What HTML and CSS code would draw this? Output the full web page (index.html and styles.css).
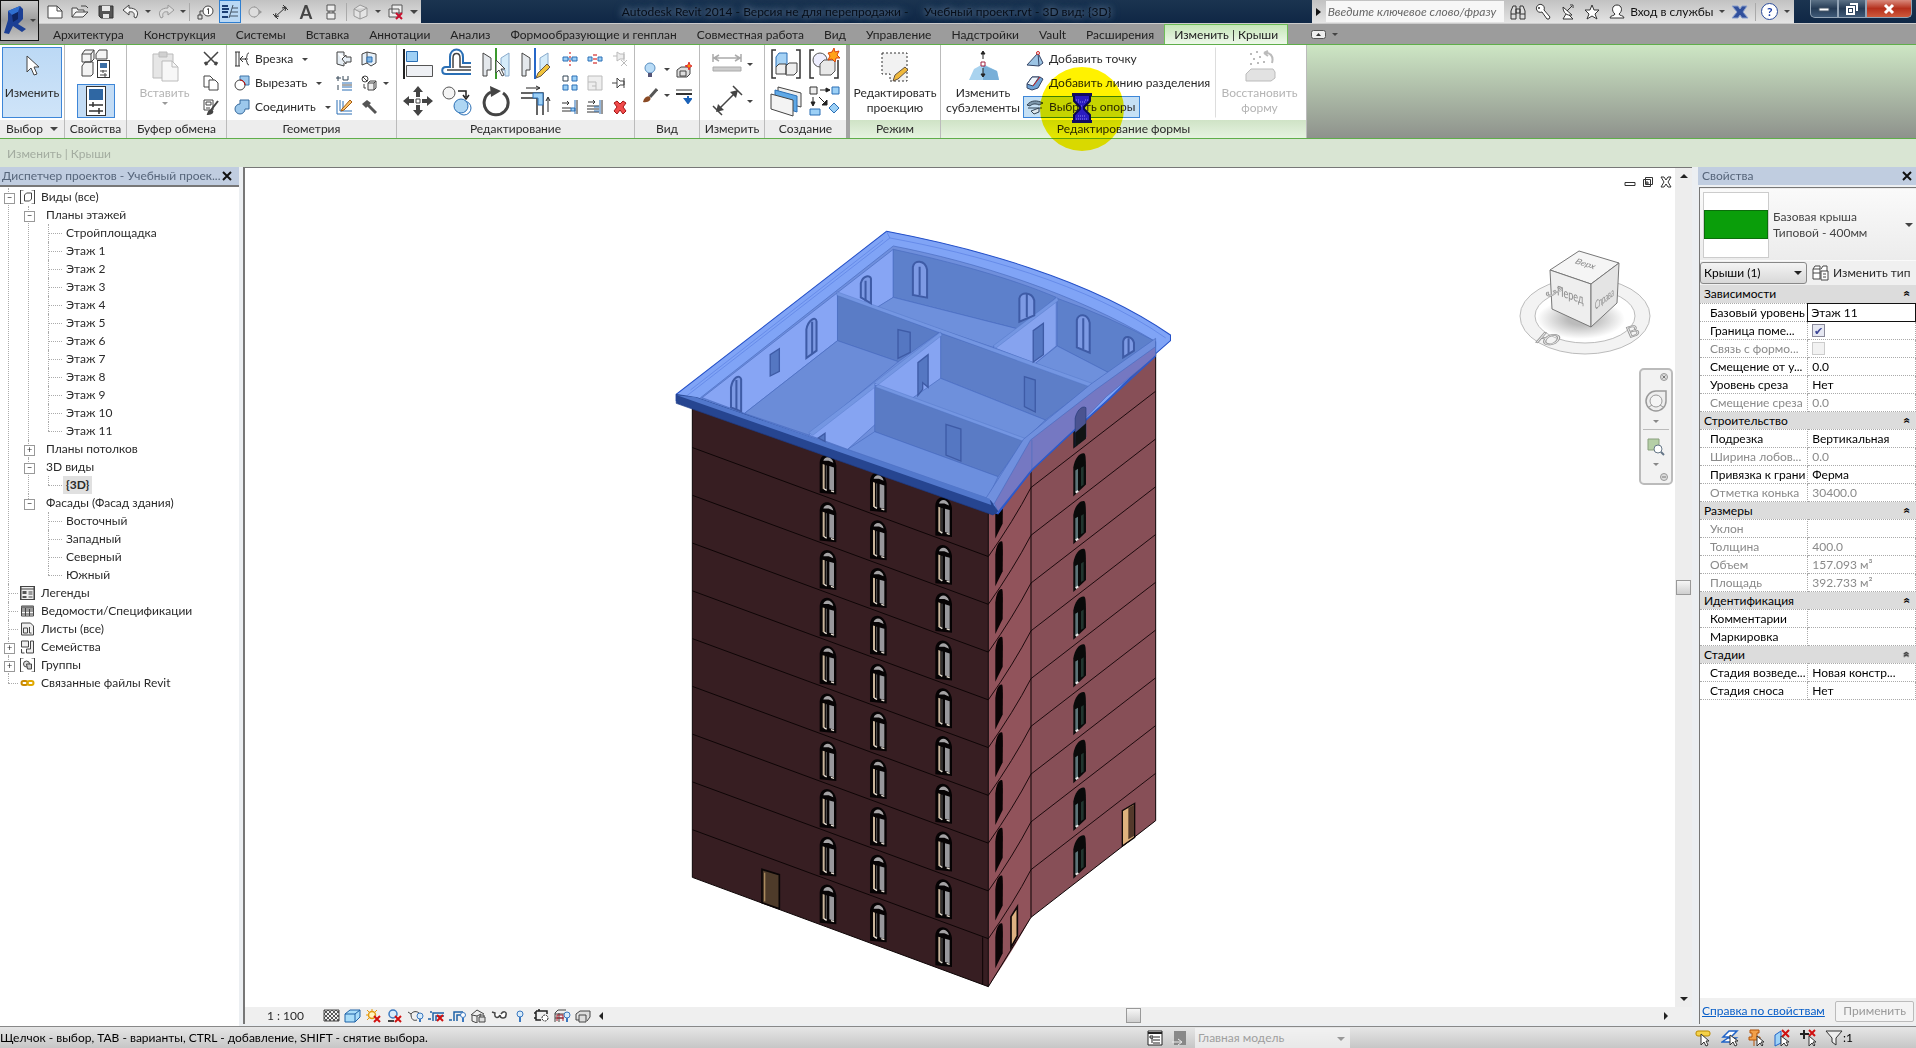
FILE: index.html
```html
<!DOCTYPE html>
<html lang="ru">
<head>
    <meta charset="UTF-8">
    <meta name="viewport" content="width=device-width, initial-scale=1.0">
    <title>Autodesk Revit 2014</title>
    <link rel="stylesheet" href="styles.css">
</head>
<body>
<header class="titlebar">
    <button class="app-button" aria-label="Меню приложения">
        <svg width="24" height="32" viewBox="0 0 24 32"><path d="M4 6 16 1 19 4v10l-5 5 8 5-4 3-9-6-4 8-5-1 4-13z" fill="#1c3f94"/><path d="M4 6 16 1l-2 6-6 3z" fill="#2f6fd0"/><path d="M8 10l6-3v7l-5 3z" fill="#0f2560"/></svg>
        <span class="caret"></span>
    </button>
    <div class="qat">
        <button class="qbtn" aria-label="Создать"><svg width="18" height="16" viewBox="0 0 18 16"><path d="M2 2h9l5 5v7H2z" fill="#fff" stroke="#444"/><path d="M11 2v5h5" fill="none" stroke="#444"/></svg></button>
        <button class="qbtn" aria-label="Открыть"><svg width="18" height="16" viewBox="0 0 18 16"><path d="M1 13V4h5l1 2h6v2M1 13l4-5h12l-5 5z" fill="#f4f4f4" stroke="#444"/><path d="M10 2h5l2 2" fill="none" stroke="#444"/></svg></button>
        <button class="qbtn" aria-label="Сохранить"><svg width="18" height="16" viewBox="0 0 18 16"><path d="M2 2h14v12H4l-2-2z" fill="#555" stroke="#333"/><path d="M5 2h8v5H5zM6 10h6v4H6z" fill="#e8e8e8"/></svg></button>
        <button class="qbtn" aria-label="Отменить"><svg width="18" height="16" viewBox="0 0 18 16"><path d="M7 1 1 6l6 5V8c4-1 6 1 5 5l2 1c4-6 0-10-7-10z" fill="#f6f6f6" stroke="#444"/></svg></button>
        <span class="caret"></span>
        <button class="qbtn" aria-label="Повторить"><svg width="18" height="16" viewBox="0 0 18 16"><path d="M11 1l6 5-6 5V8c-4-1-6 1-5 5l-2 1C0 8 4 4 11 4z" fill="#ddd" stroke="#999"/></svg></button>
        <span class="caret"></span>
        <span class="qsep"></span>
        <button class="qbtn" aria-label="Марка"><svg width="18" height="16" viewBox="0 0 18 16"><circle cx="12" cy="7" r="5" fill="#fff" stroke="#444"/><path d="M12.500 10V4.500l-1.500 1M7 7H4v4M2 11h4v4H2z" fill="none" stroke="#444"/></svg></button>
        <button class="qbtn qbtn-on" aria-label="Тонкие линии"><svg width="18" height="16" viewBox="0 0 18 16"><path d="M1 2h6M1 5h7M1 8h6M1 13h6" stroke="#1d3f73" stroke-width="2"/><path d="M8 14 12 1M11 4h6M10 8h7M9 12h8" stroke="#456" fill="none"/></svg></button>
        <button class="qbtn" aria-label="Разрез"><svg width="18" height="16" viewBox="0 0 18 16"><path d="M8 2 16 8 8 14z" fill="#999"/><circle cx="8" cy="8" r="5" fill="#ddd" stroke="#999"/></svg></button>
        <button class="qbtn" aria-label="Размер"><svg width="18" height="16" viewBox="0 0 18 16"><path d="M3 13 14 3M1 10l5 5M11 1l5 5M3 13l1-4M3 13l4-1M14 3l-4 1M14 3l-1 4" stroke="#333" fill="none"/></svg></button>
        <button class="qbtn qbtn-text" aria-label="Текст">A</button>
        <button class="qbtn" aria-label="Сечение"><svg width="18" height="16" viewBox="0 0 18 16"><path d="M5 1h8v6H5zM5 9h8v6H5zM7 7v2M11 7v2" fill="#eee" stroke="#555"/></svg></button>
        <span class="qsep"></span>
        <button class="qbtn" aria-label="3D вид"><svg width="18" height="16" viewBox="0 0 18 16"><path d="M2 5l6-4 7 3v8l-7 3-6-3zM2 5l6 3 7-4M8 8v7" fill="#e4e4e4" stroke="#999"/></svg></button>
        <span class="caret"></span>
        <button class="qbtn" aria-label="Закрыть окна"><svg width="18" height="16" viewBox="0 0 18 16"><path d="M5 1h10v8H5zM2 5h10v8H2z" fill="#eee" stroke="#555"/><path d="M9 9l6 6M15 9l-6 6" stroke="#c8102e" stroke-width="2"/></svg></button>
        <span class="caret caret-big"></span>
    </div>
    <h1 class="title">Autodesk Revit 2014 - Версия не для перепродажи - &nbsp; &nbsp; Учебный проект.rvt - 3D вид: {3D}</h1>
    <div class="infocenter">
        <span class="play"></span>
        <input class="search" type="text" aria-label="Поиск" placeholder="Введите ключевое слово/фразу">
        <button class="ibtn" aria-label="Найти"><svg width="18" height="18" viewBox="0 0 18 18"><path d="M2 16V8l2-5h3v13zM16 16V8l-2-5h-3v13zM7 6h4v4H7zM2 11h5M11 11h5" fill="#ddd" stroke="#333"/></svg></button>
        <button class="ibtn" aria-label="Ключ"><svg width="18" height="18" viewBox="0 0 18 18"><path d="M8 9a4 4 0 1 1 2-2l6 7-1 2-2 0z" fill="#fff" stroke="#333"/><circle cx="5" cy="5" r="1" fill="#333"/></svg></button>
        <button class="ibtn" aria-label="Связь"><svg width="18" height="18" viewBox="0 0 18 18"><path d="M4 4c0 6 4 9 9 8zM8 8l5-5M11 2h3v3M7 11l-3 5h10l-4-4" fill="#fff" stroke="#333"/></svg></button>
        <button class="ibtn" aria-label="Избранное"><svg width="18" height="18" viewBox="0 0 18 18"><path d="M9 2l2 5h5l-4 4 2 5-5-3-5 3 2-5-4-4h5z" fill="#fff" stroke="#333"/></svg></button>
        <button class="ibtn signin"><svg width="18" height="18" viewBox="0 0 18 18"><path d="M2 15c0-3 5-2 5-4-4-3-3-9 2-9s6 6 2 9c0 2 5 1 5 4z" fill="#fff" stroke="#333"/></svg>Вход в службы</button>
        <span class="caret"></span>
        <button class="ibtn exchange" aria-label="Exchange"><svg width="18" height="16" viewBox="0 0 18 16"><path d="M1 2h6l2 3 2-3h5l-4 6 5 6h-6l-2-3-2 3H1l5-6z" fill="#31509c" stroke="#8ca0cc"/></svg></button>
        <span class="qsep"></span>
        <button class="ibtn help" aria-label="Справка"><span>?</span></button>
        <span class="caret"></span>
    </div>
    <div class="window-buttons">
        <button aria-label="Свернуть"><svg width="14" height="12" viewBox="0 0 14 12"><path d="M2 5h10v3H2z" fill="#fff" stroke="#456"/></svg></button>
        <button aria-label="Развернуть"><svg width="14" height="12" viewBox="0 0 14 12"><path d="M5 1h7v7M2 4h7v7H2zM5 7h1v1H5z" fill="none" stroke="#fff" stroke-width="2"/></svg></button>
        <button class="close" aria-label="Закрыть"><svg width="14" height="12" viewBox="0 0 14 12"><path d="M3 2l8 8M11 2l-8 8" stroke="#fff" stroke-width="3"/></svg></button>
    </div>
</header>

<nav class="tabs">
    <a href="#">Архитектура</a>
    <a href="#">Конструкция</a>
    <a href="#">Системы</a>
    <a href="#">Вставка</a>
    <a href="#">Аннотации</a>
    <a href="#">Анализ</a>
    <a href="#">Формообразующие и генплан</a>
    <a href="#">Совместная работа</a>
    <a href="#">Вид</a>
    <a href="#">Управление</a>
    <a href="#">Надстройки</a>
    <a href="#">Vault</a>
    <a href="#">Расширения</a>
    <a href="#" class="active">Изменить | Крыши</a>
    <button class="collapse" aria-label="Свернуть ленту"><svg width="15" height="9" viewBox="0 0 15 9"><rect x=".5" y=".5" width="14" height="8" rx="2" fill="#eee" stroke="#555"/><path d="M5 6l2.500-3L10 6z" fill="#333"/></svg></button>
    <span class="caret"></span>
</nav>

<div class="ribbon">
    <section class="panel p-select">
        <div class="panel-body">
            <button class="big big-on"><svg width="32" height="32" viewBox="0 0 32 32"><path d="M11 6v16l4-4 3 7 3-1-3-7h5z" fill="#fff" stroke="#444"/></svg>Изменить</button>
        </div>
        <h2>Выбор <span class="caret caret-big"></span></h2>
    </section>
    <section class="panel p-props">
        <div class="panel-body column">
            <button class="tile" aria-label="Свойства типа"><svg width="32" height="32" viewBox="0 0 32 32"><path d="M2 6l3-4h9v9l-3 3H2zM16 6l3-4h8v9H16zM2 18l3-4h8v12l-2 2H2zM2 6h9v8M11 6l3-4" fill="#f4f4f4" stroke="#444"/><rect x="17.500" y="12.500" width="12" height="17" fill="#fff" stroke="#333"/><path d="M20 15h7v5h-7z" fill="#3a6ea5"/><path d="M20 23h7M20 27h7M23 22v3M25 25v4" stroke="#444"/></svg></button>
            <button class="tile tile-on" aria-label="Свойства"><svg width="32" height="32" viewBox="0 0 32 32"><rect x="6.500" y="1.500" width="19" height="29" fill="#fff" stroke="#333"/><path d="M9 4h14v11H9z" fill="#2f67a3"/><path d="M9 20h14M9 26h14M13 17v5M19 23v6" stroke="#333" stroke-width="1.500"/></svg></button>
        </div>
        <h2>Свойства</h2>
    </section>
    <section class="panel p-clip">
        <div class="panel-body">
            <button class="big dim"><svg width="32" height="32" viewBox="0 0 32 32"><path d="M4 4h20v24H4z" fill="#e6e6e6" stroke="#bbb"/><path d="M10 2h8v5h-8z" fill="#d0d0d0" stroke="#bbb"/><path d="M13 11h10l6 6v14H13z" fill="#f7f7f7" stroke="#bbb"/><path d="M23 11v6h6" fill="none" stroke="#bbb"/></svg>Вставить<span class="caret"></span></button>
            <div class="stack">
                <button aria-label="Вырезать"><svg width="16" height="16" viewBox="0 0 16 16"><path d="M1 1l11 11M15 1 4 12" stroke="#444" stroke-width="1.500"/><path d="M2 11l2 3M14 11l-2 3" stroke="#444" stroke-width="3"/></svg></button>
                <button aria-label="Копировать"><svg width="16" height="16" viewBox="0 0 16 16"><path d="M1 1h6l3 3v8H1z" fill="#fff" stroke="#444"/><path d="M6 5h6l3 3v7H6z" fill="#fff" stroke="#444"/></svg></button>
                <button aria-label="Копировать свойства"><svg width="16" height="16" viewBox="0 0 16 16"><path d="M1 1h9v10H1zM3 3h5v3H3zM3 9h4" fill="#fff" stroke="#444"/><path d="M15 2 8 11M5 15c1-4 3-4 4-3s0 3-4 3z" stroke="#444" stroke-width="2" fill="#444"/></svg></button>
            </div>
        </div>
        <h2>Буфер обмена</h2>
    </section>
    <section class="panel p-geom">
        <div class="panel-body">
            <div class="stack">
                <button class="row"><svg width="16" height="16" viewBox="0 0 16 16"><path d="M1 1h5M1 15h5M2 1v14M5 1v14M15 2c-3 0-1 5-4 6 3 1 1 6 4 6M14 8H7M9 5 6 8l3 3" fill="none" stroke="#333"/></svg>Врезка<span class="caret"></span></button>
                <button class="row"><svg width="16" height="16" viewBox="0 0 16 16"><path d="M6 1h9v9H6z" fill="#9cc8ec" stroke="#3f75a8"/><circle cx="6" cy="10" r="5" fill="#fff" stroke="#444"/><path d="M6 5a5 5 0 0 1 5 5" fill="none" stroke="#c00"/></svg>Вырезать<span class="caret"></span></button>
                <button class="row"><svg width="16" height="16" viewBox="0 0 16 16"><path d="M6 5V1h9v9h-4A5 5 0 1 1 6 5z" fill="#9cc8ec" stroke="#35699c"/></svg>Соединить<span class="caret"></span></button>
            </div>
            <div class="stack">
                <button aria-label="Торец"><svg width="16" height="16" viewBox="0 0 16 16"><path d="M1 1h7v4M1 1v12l7 2v-3M6 8l4-4v2h5v5h-5v2z" fill="#e6eef5" stroke="#444"/></svg></button>
                <button aria-label="Стыки"><svg width="16" height="16" viewBox="0 0 16 16"><path d="M6 8h10M6 12h10M6 15h10" stroke="#2a6fb5"/><path d="M6 10h10" stroke="#555"/><path d="M2 1v5M0 3h5M7 1v4h5V1M2 10v5" stroke="#345" fill="none"/></svg></button>
                <button aria-label="Соединение стен"><svg width="16" height="16" viewBox="0 0 16 16"><path d="M1 1v14h15M4 1v11h12M7 2v7" stroke="#2a6fb5" fill="none"/><path d="M6 10 14 1l2 2-8 8-3 1z" fill="#fbc36a" stroke="#a55a10"/></svg></button>
            </div>
            <div class="stack stack-tail">
                <button aria-label="Разделить грань"><svg width="16" height="16" viewBox="0 0 16 16"><path d="M1 3l5-2v11l-5 2zM6 1l9 2v9l-5 3-4-3" fill="#e8f1f8" stroke="#444"/><path d="M6 6h5v5H6z" fill="#7fb5e2" stroke="#2a6fb5"/></svg></button>
                <button class="row tight" aria-label="Раскраска"><svg width="16" height="16" viewBox="0 0 16 16"><circle cx="4" cy="4" r="3" fill="#fff" stroke="#444"/><path d="M2 2l4 4M3 9v4h2" stroke="#444" fill="none"/><path d="M7 8l2-2h6v7l-2 2H7zM7 8h6v7M13 8l2-2" fill="#eee" stroke="#444"/></svg><span class="caret"></span></button>
                <button aria-label="Снос"><svg width="16" height="16" viewBox="0 0 16 16"><path d="M1 5 6 1l4 3-5 5z" fill="#555"/><path d="M7 6l8 8" stroke="#555" stroke-width="3"/></svg></button>
            </div>
        </div>
        <h2>Геометрия</h2>
    </section>
    <section class="panel p-edit">
        <div class="panel-body">
            <div class="big-grid">
                <button aria-label="Выровнять"><svg width="32" height="32" viewBox="0 0 32 32"><path d="M2 1v30" stroke="#222" stroke-width="2"/><path d="M4.500 3.500h11v10h-11z" fill="#9fd0f5" stroke="#2a6fb5"/><path d="M4.500 17.500h26v11h-26z" fill="#eef0f4" stroke="#555"/></svg></button>
                <button aria-label="Смещение"><svg width="32" height="32" viewBox="0 0 32 32"><path d="M30 26H5c-5 0-5-7 0-7h4V9c0-10 13-10 13 0v6h8" fill="none" stroke="#2a6fb5" stroke-width="2"/><path d="M30 22H6M12 20V10c0-6 7-6 7 0v9h11" fill="none" stroke="#444" stroke-width="1.500"/></svg></button>
                <button aria-label="Зеркало - Выбрать ось"><svg width="32" height="32" viewBox="0 0 32 32"><path d="M3 5l8 5v12h-4v6H3z" fill="#e4e8ec" stroke="#444"/><path d="M16 0v31" stroke="#3c9a2e" stroke-width="2"/><path d="M29 5l-8 5v12h4v6h4z" fill="#d5ecfa" stroke="#8ac"/><path d="M16 12v13l3-3 3 6 2-1-3-6h4z" fill="#fff" stroke="#444"/></svg></button>
                <button aria-label="Зеркало - Нарисовать ось"><svg width="32" height="32" viewBox="0 0 32 32"><path d="M3 5l8 5v12h-4v6H3z" fill="#e4e8ec" stroke="#444"/><path d="M16 0v31" stroke="#2667c8" stroke-width="2"/><path d="M29 5l-8 5v12h8z" fill="#d5ecfa" stroke="#8ac"/><path d="M17 30l2-5 9-9 3 3-9 9z" fill="#f0c33c" stroke="#654"/></svg></button>
                <button aria-label="Переместить"><svg width="32" height="32" viewBox="0 0 32 32"><path d="M16 1l5 6h-3v5h-4V7h-3zM16 31l5-6h-3v-5h-4v5h-3zM1 16l6-5v3h5v4H7v3zM31 16l-6-5v3h-5v4h5v3z" fill="#444"/><path d="M14 14h4v4h-4z" fill="#fff" stroke="#444"/></svg></button>
                <button aria-label="Копировать"><svg width="32" height="32" viewBox="0 0 32 32"><circle cx="8" cy="8" r="6" fill="#f4f4f4" stroke="#555"/><circle cx="23" cy="23" r="7" fill="#fff" stroke="#2a6fb5"/><circle cx="20" cy="21" r="7" fill="#aed6f3" stroke="#2a6fb5"/><path d="M17 6h8v6M22 10l3 4 3-4" fill="none" stroke="#222" stroke-width="1.500"/></svg></button>
                <button aria-label="Повернуть"><svg width="32" height="32" viewBox="0 0 32 32"><path d="M23 8a12 12 0 1 1-12-1" fill="none" stroke="#444" stroke-width="3"/><path d="M10 1l11 5-10 6z" fill="#444"/></svg></button>
                <button aria-label="Обрезать/Удлинить"><svg width="32" height="32" viewBox="0 0 32 32"><path d="M2 8h22v22M2 13h16v17" fill="none" stroke="#333" stroke-width="1.500"/><path d="M14 8h10v12h-5v-7h-5z" fill="#9cd0f6" stroke="#2a6fb5"/><path d="M7 3h13M17 1l4 2-4 2M29 27V13M27 16l2-4 2 4" fill="none" stroke="#222"/></svg></button>
            </div>
            <div class="small-grid">
                <button aria-label="Разделить элемент"><svg width="16" height="16" viewBox="0 0 16 16"><path d="M1 6h5v4H1zM10 6h5v4h-5zM6 8h4" fill="#9cd0f6" stroke="#2a6fb5"/><path d="M8 1v14" stroke="#c00" stroke-dasharray="2 2"/></svg></button>
                <button aria-label="Разделить с зазором"><svg width="16" height="16" viewBox="0 0 16 16"><path d="M1 6h4v4H1zM11 6h4v4h-4z" fill="#9cd0f6" stroke="#2a6fb5"/><path d="M7 3v11M9 3v11" stroke="#c00" stroke-dasharray="2 2"/></svg></button>
                <button aria-label="Открепить"><svg width="16" height="16" viewBox="0 0 16 16"><path d="M1 5h4M5 1v9l3-2h4V3H8zM12 1v9M9 9l6 6M15 9l-6 6" fill="#eee" stroke="#bbb"/></svg></button>
                <button aria-label="Массив"><svg width="16" height="16" viewBox="0 0 16 16"><path d="M1 1h5v5H1z" fill="#fff" stroke="#345"/><path d="M10 1h5v5h-5zM1 10h5v5H1zM10 10h5v5h-5z" fill="#9cd0f6" stroke="#2a6fb5"/></svg></button>
                <button aria-label="Масштаб"><svg width="16" height="16" viewBox="0 0 16 16"><path d="M1 1h14v14H1zM1 7h8v8M5 11h4" fill="#eee" stroke="#bbb"/></svg></button>
                <button aria-label="Прикрепить"><svg width="16" height="16" viewBox="0 0 16 16"><path d="M0 8h5M5 3v10l3-3h4V6H8zM12 3v10" fill="#fff" stroke="#444"/></svg></button>
                <button aria-label="Обрезать один"><svg width="16" height="16" viewBox="0 0 16 16"><path d="M0 4h7M5 2l2 2-2 2M0 9h9M0 12h9M15 1v14" fill="none" stroke="#333"/><path d="M9 9h4v3H9zM13 1v14" fill="#9cd0f6" stroke="#2a6fb5"/></svg></button>
                <button aria-label="Обрезать несколько"><svg width="16" height="16" viewBox="0 0 16 16"><path d="M1 3h7M6 1l2 2-2 2M0 7h12M0 10h12M0 13h12M15 1v14" fill="none" stroke="#333"/><path d="M13 1v14M7 8h5M7 12h5" stroke="#2a6fb5"/></svg></button>
                <button aria-label="Удалить"><svg width="16" height="16" viewBox="0 0 16 16"><path d="M2 4l3-2 3 3 3-3 3 2-3 4 3 4-3 3-3-4-3 4-3-3 3-4z" fill="#f04a4a" stroke="#a31515"/></svg></button>
            </div>
        </div>
        <h2>Редактирование</h2>
    </section>
    <section class="panel p-view">
        <div class="panel-body pair">
            <button class="row tight" aria-label="Скрыть"><svg width="16" height="16" viewBox="0 0 16 16"><circle cx="8" cy="6" r="5" fill="#b9dcf7" stroke="#5a8fc0"/><path d="M6 11h4v4H6z" fill="#557" /></svg><span class="caret"></span></button>
            <button aria-label="Показать скрытые"><svg width="16" height="16" viewBox="0 0 16 16"><path d="M1 8l4-3h9v7l-3 3H1zM4 9h6v5H4z" fill="#ddd" stroke="#444"/><path d="M13 0l1 3 2 1-2 1-1 3-1-3-3-1 3-1z" fill="#f80" stroke="#d33"/></svg></button>
            <button class="row tight" aria-label="Переопределить"><svg width="16" height="16" viewBox="0 0 16 16"><path d="M15 1 8 9" stroke="#555" stroke-width="3"/><path d="M1 14c1-5 5-7 7-5 2 3-2 6-7 5z" fill="#8a4a24"/></svg><span class="caret"></span></button>
            <button aria-label="Линии"><svg width="16" height="16" viewBox="0 0 16 16"><path d="M0 2h16" stroke="#333"/><path d="M0 6h16" stroke="#333" stroke-width="2"/><path d="M12 8v6M9 11l3 4 3-4z" stroke="#1b62b8" stroke-width="2" fill="#1b62b8"/></svg></button>
        </div>
        <h2>Вид</h2>
    </section>
    <section class="panel p-measure">
        <div class="panel-body column">
            <button class="row tight" aria-label="Измерить"><svg width="32" height="32" viewBox="0 0 32 32"><path d="M3 10h26M8 7l-5 3 5 3M24 7l5 3-5 3M2 6v8M30 6v8" fill="none" stroke="#aaa" stroke-width="1.500"/><path d="M2 19h28v4H2z" fill="#ccc" stroke="#aaa"/></svg><span class="caret"></span></button>
            <button class="row tight" aria-label="Размер"><svg width="32" height="32" viewBox="0 0 32 32"><path d="M6 26 26 6M2 21l9 9M22 1l9 9" stroke="#444" stroke-width="1.500"/><path d="M5 27l2-8 6 6zM27 5l-2 8-6-6z" fill="#444"/></svg><span class="caret"></span></button>
        </div>
        <h2>Измерить</h2>
    </section>
    <section class="panel p-create">
        <div class="panel-body quad">
            <button aria-label="Создать сборку"><svg width="32" height="32" viewBox="0 0 32 32"><path d="M6 2H2v28h4M26 2h4v28h-4" fill="none" stroke="#333" stroke-width="1.500"/><path d="M6 9l3-4h8v11l-3 3H6z" fill="#a5d2f5" stroke="#2a6fb5"/><path d="M6 19l3-3h7v10H6zM16 18l3-3h8v9l-3 3H16z" fill="#eee" stroke="#444"/></svg></button>
            <button aria-label="Создать группу"><svg width="32" height="32" viewBox="0 0 32 32"><path d="M6 2H2v28h4M26 30h4V12" fill="none" stroke="#333" stroke-width="1.500"/><circle cx="12" cy="12" r="7" fill="#eef" stroke="#555"/><path d="M12 16l4-4h11v11l-4 4H12z" fill="#e8e8e8" stroke="#555"/><path d="M26 0l1 4 4-1-2 4 3 3-4 0-1 4-3-3-4 1 2-4-2-3 4-1z" fill="#ffa31a" stroke="#d9420b"/></svg></button>
            <button aria-label="Создать части"><svg width="32" height="32" viewBox="0 0 32 32"><path d="M8 2l23 6v14l-23-6z" fill="#eee" stroke="#444"/><path d="M5 5l22 6v16L5 20z" fill="#5fa8e6" stroke="#2a6fb5"/><path d="M1 9l22 6v16L1 24z" fill="#f3f3f3" stroke="#444"/></svg></button>
            <button aria-label="Создать подобный"><svg width="32" height="32" viewBox="0 0 32 32"><path d="M2 2h7v7H2z" fill="#eee" stroke="#333"/><path d="M24 2h7v7h-7zM2 24h10v6H2zM26 18l5 5-5 5-5-5z" fill="#9cd0f6" stroke="#2a6fb5"/><path d="M12 5h9M18 3l4 2-4 2zM5 12v8M3 17l2 4 2-4zM11 12l7 7M19 15v5h-5z" fill="#222" stroke="#222"/></svg></button>
        </div>
        <h2>Создание</h2>
    </section>
    <section class="panel p-mode context">
        <div class="panel-body">
            <button class="big"><svg width="32" height="32" viewBox="0 0 32 32"><path d="M3 3h25v28H11v-7H3z" fill="#f2f2f2" stroke="#333" stroke-dasharray="2 2"/><path d="M14 31l2-6 10-8 3 3-10 9z" fill="#f0b93c" stroke="#654"/></svg>Редактировать проекцию</button>
        </div>
        <h2>Режим</h2>
    </section>
    <section class="panel p-shape context">
        <div class="panel-body">
            <button class="big"><svg width="32" height="32" viewBox="0 0 32 32"><path d="M2 30 7 19l9-5 14 7 2 9z" fill="#a9d3ef"/><path d="M16 15v15l16 0-2-9z" fill="#79afd8"/><path d="M14 12h4v4h-4z" fill="#fff" stroke="#a02040"/><path d="M16 9V3M16 18v7M14 4l2-3 2 3zM14 24l2 3 2-3z" stroke="#222" fill="#222"/></svg>Изменить субэлементы</button>
            <div class="stack shape-list">
                <button class="row"><svg width="18" height="16" viewBox="0 0 18 16"><path d="M1 14 12 2l5 10-4 3z" fill="#9cc4e4" stroke="#346"/><path d="M12 2l1 13" stroke="#346"/><circle cx="12" cy="2" r="1.500" fill="#fff" stroke="#c22"/></svg>Добавить точку</button>
                <button class="row"><svg width="18" height="16" viewBox="0 0 18 16"><path d="M1 9 6 2h8l3 2-5 9-6 2-5-2z" fill="#6fa3d6" stroke="#346"/><path d="M1 9l6 2 6-9H6z" fill="#eef5fb" stroke="#346"/><path d="M7 11l7-9" stroke="#c22"/></svg>Добавить линию разделения</button>
                <button class="row row-on"><svg width="18" height="16" viewBox="0 0 18 16"><path d="M1 6c4-5 10-5 16-2l-4 2c-4-2-7-1-9 1z" fill="#7e98ad" stroke="#345"/><path d="M2 9h14M5 12l8-3v4l-5 2z" fill="#dfe8ee" stroke="#345"/></svg>Выбрать опоры</button>
            </div>
            <button class="big dim reset"><svg width="32" height="32" viewBox="0 0 32 32"><path d="M2 24l5-5h22l2 3v6l-4 3H2z" fill="#e2e2e2" stroke="#bbb"/><path d="M6 4h2M12 2h2M9 9h2M15 7h2M6 14h2M13 13h2M19 12h2" stroke="#bbb" stroke-width="2"/><path d="M20 3c6-1 10 3 8 10M20 3l4-2M20 3l4 3" fill="none" stroke="#bbb" stroke-width="2"/></svg>Восстановить форму</button>
        </div>
        <h2>Редактирование формы</h2>
    </section>
    <svg class="busy" width="86" height="86" viewBox="0 0 86 86"><circle cx="43" cy="43" r="42" fill="#fff200"/></svg>
    <svg class="hourglass" width="22" height="32" viewBox="0 0 22 32"><path d="M3 3h16v6l-6 6v2l6 6v6H3v-6l6-6v-2L3 9z" fill="#2a1cc0" stroke="#0a0850" stroke-width="2"/><path d="M5 8h3M14 8h3M7 10h8M10 14h2M7 24h8M5 27h12" stroke="#8e86f0" stroke-dasharray="1 1"/><path d="M1 1h20v3H1zM1 28h20v3H1z" fill="#120c60"/></svg>
</div>
<div class="options">Изменить | Крыши</div>

<main>
    <aside class="browser">
        <div class="dock-head"><span>Диспетчер проектов - Учебный проек...</span><button aria-label="Закрыть"><svg width="10" height="10" viewBox="0 0 10 10"><path d="M1 1l8 8M9 1 1 9" stroke="#111" stroke-width="2"/></svg></button></div>
        <ul class="tree">
            <li class="open"><svg class="ti" viewBox="0 0 14 14"><path d="M3 0H0v14h3M11 0h3v14h-3" fill="none" stroke="#444"/><path d="M4 5l2-2h5v6l-2 2H4z" fill="#fff" stroke="#444"/></svg><span>Виды (все)</span>
                <ul>
                    <li class="open"><span>Планы этажей</span>
                        <ul>
                            <li><span>Стройплощадка</span></li>
                            <li><span>Этаж 1</span></li>
                            <li><span>Этаж 2</span></li>
                            <li><span>Этаж 3</span></li>
                            <li><span>Этаж 4</span></li>
                            <li><span>Этаж 5</span></li>
                            <li><span>Этаж 6</span></li>
                            <li><span>Этаж 7</span></li>
                            <li><span>Этаж 8</span></li>
                            <li><span>Этаж 9</span></li>
                            <li><span>Этаж 10</span></li>
                            <li><span>Этаж 11</span></li>
                        </ul>
                    </li>
                    <li class="shut"><span>Планы потолков</span></li>
                    <li class="open"><span>3D виды</span>
                        <ul>
                            <li><span class="current">{3D}</span></li>
                        </ul>
                    </li>
                    <li class="open"><span>Фасады (Фасад здания)</span>
                        <ul>
                            <li><span>Восточный</span></li>
                            <li><span>Западный</span></li>
                            <li><span>Северный</span></li>
                            <li><span>Южный</span></li>
                        </ul>
                    </li>
                </ul>
            </li>
            <li><svg class="ti" viewBox="0 0 14 14"><path d="M0 0h14v14H0z" fill="#eee" stroke="#444" stroke-width="2"/><path d="M0 3h14M8 6h4M8 8h4M8 11h4" stroke="#444"/><path d="M2 5h4v3H2zM2 10h4v2H2z" fill="#555"/></svg><span>Легенды</span></li>
            <li><svg class="ti" viewBox="0 0 14 14"><path d="M1 2h12v10H1zM1 5h12M1 7h12M1 10h12M5 2v10M9 5v7" fill="#f4f4f4" stroke="#444"/><path d="M1 2h12v2H1z" fill="#777"/></svg><span>Ведомости/Спецификации</span></li>
            <li><svg class="ti" viewBox="0 0 14 14"><path d="M1 1h9l3 3v9H1zM3 6h4v5H3zM9 5v6h2" fill="#eee" stroke="#444"/></svg><span>Листы (все)</span></li>
            <li class="shut"><svg class="ti" viewBox="0 0 14 14"><path d="M1 1h7v6H1zM10 1h3v12H6V9h4zM1 9v4h3" fill="#eee" stroke="#444"/></svg><span>Семейства</span></li>
            <li class="shut"><svg class="ti" viewBox="0 0 14 14"><path d="M3 0H0v14h3M11 0h3v14h-3" fill="none" stroke="#444"/><circle cx="6" cy="6" r="3" fill="#ddd" stroke="#444"/><path d="M6 6h5v5H7z" fill="#ccc" stroke="#444"/></svg><span>Группы</span></li>
            <li><svg class="ti" viewBox="0 0 14 14"><rect x="1" y="5" width="6" height="4" rx="2" fill="none" stroke="#c98a00" stroke-width="2"/><rect x="7" y="5" width="6" height="4" rx="2" fill="none" stroke="#e0a800" stroke-width="2"/></svg><span>Связанные файлы Revit</span></li>
        </ul>
    </aside>

    <section class="view">
        <div class="view-main">
            <div class="canvas">
                <svg class="model" width="530" height="790" viewBox="660 210 530 790">
                    <defs>
                        <g id="winL">
                            <path d="M0 118V28C2 -6 44 -6 50 36v87z" fill="#060304"/>
                            <path d="M11 22c4-16 26-14 30 6l-14-6z" fill="#a5a3a5"/>
                            <path d="M9 32l6 2v74l-6-2z" fill="#c8b49a"/>
                            <path d="M29 38l14 4v70l-14-4z" fill="#98989c"/>
                            <path d="M20 36v74" stroke="#888" stroke-width="2"/>
                            <path d="M13 106l8 5M34 112l9 3" stroke="#e8e0d4" stroke-width="4"/>
                        </g>
                        <g id="storey">
                            <path d="M37 989 925 1316" stroke="#0e0506" stroke-width="3"/>
                            <path d="M925 1316Q1000 1210 1053 1109L1427 820" fill="none" stroke="#1d0a0d" stroke-width="3"/>
                            <use href="#winL" x="419" y="1150"/>
                            <use href="#winL" x="570" y="1204"/>
                            <use href="#winL" x="766" y="1278"/>
                            <path d="M946 1405v-95c2-24 10-42 20-40 3 2 3 20 2 90z" fill="#0a0405"/>
                            <path d="M1180 1136v-88c4-28 20-44 32-42 6 4 6 12 6 94z" fill="#0a0a0a"/>
                            <path d="M1186 1058l8-5v64l-8 5z" fill="#5d7478"/>
                            <path d="M1203 1050l8-5v56l-8 5z" fill="#22352f"/>
                            <path d="M1187 1124l8-5" stroke="#eee" stroke-width="6"/>
                        </g>
                    </defs>
                    <!-- стены -->
                    <g transform="translate(680 500) scale(.33333)">
                        <path d="M37-300 925 20V1460L37 1132z" fill="#371e22"/>
                        <path d="M925 20 1053-110V1252Q1000 1350 925 1460z" fill="#91535b"/>
                        <path d="M1053-110 1427-460V962L1053 1252z" fill="#874f57"/>
                        <use href="#storey"/>
                        <use href="#storey" y="-143.300"/>
                        <use href="#storey" y="-286.600"/>
                        <use href="#storey" y="-429.900"/>
                        <use href="#storey" y="-573.200"/>
                        <use href="#storey" y="-716.500"/>
                        <use href="#storey" y="-859.800"/>
                        <use href="#storey" y="-1003.100"/>
                        <use href="#storey" y="-1146.400"/>
                        <use href="#storey" y="-1289.700"/>
                        <path d="M37-300V1132L925 1460 1053 1252 1427 962V-440M925 20V1460M1053-90V1252M908 1312v142" fill="none" stroke="#0c0405" stroke-width="3"/>
                        <path d="M246 1108l52 16v102l-52-18z" fill="#4e3b2a" stroke="#0a0506" stroke-width="5"/>
                        <path d="M254 1118v86" stroke="#a98a5e" stroke-width="4"/>
                        <path d="M1327 1038v-106l37-22v102z" fill="#dfb27e" stroke="#100808" stroke-width="4"/>
                        <path d="M1345 924l17-10v94l-17 10z" fill="#54392b"/>
                        <path d="M993 1342v-92l19-30v88z" fill="#ddb182" stroke="#100808" stroke-width="5"/>
                    </g>
                    <!-- крыша, выделена -->
                    <g transform="translate(660 210) scale(.33807 .33333)" stroke="#4a6cc0" stroke-width="2">
                        <path d="M670 64C920 112 1270 205 1510 375V392Q1420 470 1320 575L1210 675 1100 780 1000 912 980 905 48 572V553z" fill="#80a4f6" stroke="#2450c8" stroke-width="3"/>
                        <path d="M680 84C920 128 1270 222 1496 384M670 64 680 84 76 560M660 90 90 540" fill="none" stroke="#5a80e2"/>
                        <path d="M690 108C930 155 1230 250 1466 395L1080 690 985 872 120 563z" fill="#6f8fdc"/>
                        <path d="M690 118V262L640 295 525 250V392L250 610 125 563z" fill="#87a5f4"/>
                        <path d="M690 118C860 155 1040 205 1172 262L1060 357 690 262z" fill="#5d80cb"/>
                        <path d="M690 262 1060 357 985 412 640 293z" fill="#6e90dc"/>
                        <path d="M1175 265Q1330 320 1466 395L1335 492 1175 408z" fill="#5d80cb"/>
                        <path d="M1175 408 1335 492 1280 525 1110 460z" fill="#6e90dc"/>
                        <path d="M1172 270V408L1110 460 985 412z" fill="#86a3ef"/>
                        <path d="M525 250 825 368 705 455 525 392z" fill="#5a7cc6"/>
                        <path d="M525 392 705 455 440 675 250 610z" fill="#6b8cd8"/>
                        <path d="M830 370 1278 524 1140 630 830 505z" fill="#5d7ec8"/>
                        <path d="M830 505 1140 630 1078 690 640 525z" fill="#6e90dc"/>
                        <path d="M830 370V505L640 640 555 718 440 675z" fill="#86a4f2"/>
                        <path d="M635 525 1078 690 1000 800 635 665z" fill="#5a7bc5"/>
                        <path d="M635 665 1000 800 970 865 555 718z" fill="#6c8fde"/>
                        <path d="M523 245 1278 520 1270 530 523 256zM830 366 440 668 452 676 834 376zM1175 262 985 408 994 414 1178 272zM635 520 1082 686 1078 695 635 530z" fill="#7496e2" stroke-width="1"/>
                        <path d="M1466 395 1080 690 985 872 1000 905 1100 780 1210 675 1320 560 1466 438z" fill="#7578c2"/>
                        <path d="M1466 385 1275 522 1075 688 962 868 988 882 1096 690 1290 538 1466 410z" fill="#7090de"/>
                        <path d="M1466 395V438M1100 690V780" fill="none"/>
                        <path d="M48 553 110 563 978 872 1000 905 985 915 48 580z" fill="#264590" stroke="#1c3c88"/>
                        <path d="M50 556 105 562 975 866 980 885 90 570z" fill="#5278cc" stroke="none"/>
                        <path d="M1466 438 1320 575 1210 675 1100 780 1000 908" fill="none" stroke="#2d5acb" stroke-width="5"/>
                        <path d="M1228 710v-85c4-22 20-40 32-32v88z" fill="#4a5390" stroke="#263a78"/>
                        <path d="M1228 668 1260 640v46l-32 26z" fill="#101414" stroke="none"/>
                        <g fill="#7d9ae4" stroke="#3e5ba6" stroke-width="6">
                            <path d="M748 255v-84c4-22 36-22 42 8v84z"/>
                            <path d="M1063 335v-70c4-20 36-20 44 6v45z"/>
                            <path d="M1233 412v-82c4-20 32-20 38 8v90z"/>
                            <path d="M1370 442v-48c4-20 26-16 32 4v24z"/>
                            <path d="M594 262v-42c6-24 28-26 30-14v74z"/>
                            <path d="M433 444v-86c6-30 28-40 30-24v88z"/>
                            <path d="M210 592v-60c6-32 26-40 30-24v96z"/>
                        </g>
                        <path d="M768 170v86M1085 252v70M1252 325v92M1386 385v48M608 212v62M450 335v96M226 510v88" stroke="#3e5ba6" stroke-width="6"/>
                        <g fill="#5577c2" stroke="#3e5ba6" stroke-width="4">
                            <path d="M704 445v-86l36 8v60z"/>
                            <path d="M763 556v-98l30-24v98l-16-14v20z"/>
                            <path d="M1104 456v-94l30-22v94z"/>
                            <path d="M1078 590v-90l32 10v96z"/>
                            <path d="M846 735v-92l44 14v96z"/>
                            <path d="M326 498v-64l27-18v68z"/>
                            <path d="M468 684l20-14v24z"/>
                        </g>
                    </g>
                </svg>
                <div class="mdi">
                    <button aria-label="Свернуть вид"><svg width="12" height="12" viewBox="0 0 12 12"><path d="M1 6.500h10v3H1z" fill="#fff" stroke="#333"/></svg></button>
                    <button aria-label="Развернуть вид"><svg width="12" height="12" viewBox="0 0 12 12"><path d="M3.500 1.500h7v7h-7zM1.500 3.500h7v7h-7zM4 6h2v2H4z" fill="#fff" stroke="#333"/></svg></button>
                    <button aria-label="Закрыть вид"><svg width="12" height="12" viewBox="0 0 12 12"><path d="M1 1h3l2 3 2-3h3L8 6l3 5H8L6 8l-2 3H1l3-5z" fill="#fff" stroke="#333"/></svg></button>
                </div>
                <svg class="cube" width="132" height="106" viewBox="0 0 132 106">
                    <defs><radialGradient id="shade"><stop offset="0.300" stop-color="#bbb"/><stop offset="1" stop-color="#fff"/></radialGradient></defs>
                    <path d="M1 67a65 38 0 1 0 130 0a65 38 0 1 0-130 0M16 67a50 27 0 1 0 100 0a50 27 0 1 0-100 0" fill="#f3f3f3" fill-rule="evenodd" stroke="#bbb"/>
                    <ellipse cx="62" cy="70" rx="44" ry="20" fill="url(#shade)"/>
                    <path d="M31 21 60 2l40 12-28 21z" fill="#f5f5f5" stroke="#777"/>
                    <path d="M31 21 72 35V78L33 60z" fill="#eee" stroke="#777"/>
                    <path d="M72 35 100 14 98 54 72 78z" fill="#e4e4e4" stroke="#777"/>
                    <g class="cube-text">
                        <text transform="matrix(.8 .26 -.5 .6 55 14)">Верх</text>
                        <text transform="matrix(.82 .28 0 1.200 38 46)">Перед</text>
                        <text transform="matrix(.52 -.4 0 1.100 76 61)">Справа</text>
                        <text class="compass" transform="matrix(1 .2 -.6 .7 15 93)">Ю</text>
                        <text class="compass" transform="matrix(.9 -.3 .3 .7 110 89)">В</text>
                        <text class="compass" transform="matrix(.4 .4 -1 .5 26 44)">З</text>
                    </g>
                </svg>
                <div class="navbar">
                    <button class="nav-end" aria-label="Закрыть панель"><svg width="8" height="8" viewBox="0 0 8 8"><circle cx="4" cy="4" r="3.500" fill="#ddd" stroke="#999"/><path d="M2.500 2.500l3 3M5.500 2.500l-3 3" stroke="#777"/></svg></button>
                    <button aria-label="Штурвал"><svg width="24" height="24" viewBox="0 0 24 24"><path d="M12 2h10v10a10 10 0 1 1-10-10z" fill="#eee" stroke="#999" stroke-width="1.500"/><circle cx="12" cy="12" r="6" fill="#f4f4f4" stroke="#999"/><path d="M5 18l3-2M16 16l3 2" stroke="#999"/></svg></button>
                    <span class="caret"></span>
                    <hr>
                    <button aria-label="Зум"><svg width="18" height="18" viewBox="0 0 18 18"><path d="M1 1h11v11H1z" fill="#b5cfa6" stroke="#8aa07e"/><circle cx="11" cy="11" r="4" fill="#fff" stroke="#678"/><path d="M14 14l3 3" stroke="#678" stroke-width="2"/></svg></button>
                    <span class="caret"></span>
                    <button class="nav-end" aria-label="Параметры"><svg width="8" height="8" viewBox="0 0 8 8"><circle cx="4" cy="4" r="3.500" fill="#ddd" stroke="#999"/><path d="M2 4h4" stroke="#777"/></svg></button>
                </div>
            </div>
            <div class="vscroll"><span class="up"></span><span class="thumb"></span><span class="down"></span></div>
        </div>
        <div class="viewbar">
            <span class="scale">1 : 100</span>
            <button aria-label="Детализация"><svg width="17" height="14" viewBox="0 0 17 14"><defs><pattern id="chk" width="4" height="4" patternUnits="userSpaceOnUse"><path d="M0 0h2v2H0zM2 2h2v2H2z" fill="#555"/></pattern></defs><path d="M1 1h15v11H1z" fill="url(#chk)" stroke="#444"/></svg></button>
            <button aria-label="Визуальный стиль"><svg width="17" height="14" viewBox="0 0 17 14"><path d="M1 5l5-4h10v7l-5 5H1zM1 5h10v8M11 5l5-4" fill="#a8dcf8" stroke="#1f63a8"/></svg></button>
            <button aria-label="Солнце"><svg width="17" height="14" viewBox="0 0 17 14"><circle cx="7" cy="6" r="3.500" fill="#fff6c0" stroke="#e39a10" stroke-width="1.500"/><path d="M7 0v2M1 6h2M2 1l2 2M12 1l-2 2M2 11l2-2" stroke="#e39a10"/><path d="M9 7l6 6M15 7l-6 6" stroke="#d01010" stroke-width="2"/></svg></button>
            <button aria-label="Тени"><svg width="17" height="14" viewBox="0 0 17 14"><circle cx="7" cy="5" r="4" fill="#d9ecfa" stroke="#3a78c0" stroke-width="1.500"/><path d="M2 12h6" stroke="#444" stroke-width="2"/><path d="M9 7l6 6M15 7l-6 6" stroke="#d01010" stroke-width="2"/></svg></button>
            <button aria-label="Визуализация"><svg width="17" height="14" viewBox="0 0 17 14"><path d="M1 3l3 2c0 6 3 7 6 6M4 5c2-3 6-3 8-1" fill="none" stroke="#444"/><circle cx="13" cy="7" r="3" fill="#d9ecfa" stroke="#3a78c0"/><path d="M12 10h2v3h-2z" fill="#3a78c0"/></svg></button>
            <button aria-label="Обрезка"><svg width="17" height="14" viewBox="0 0 17 14"><path d="M0 10h3M5 12V4h11M3 2v2M8 12V7h8" fill="none" stroke="#1f63a8" stroke-width="1.500"/><path d="M9 6l6 6M15 6l-6 6" stroke="#d01010" stroke-width="2"/></svg></button>
            <button aria-label="Граница"><svg width="17" height="14" viewBox="0 0 17 14"><path d="M0 11h3M5 12V3h9M8 12V6h4" fill="none" stroke="#1f63a8" stroke-width="1.500"/><circle cx="14" cy="6" r="2.500" fill="#fff" stroke="#3a78c0"/><path d="M14 9v4" stroke="#3a78c0" stroke-width="2"/></svg></button>
            <button aria-label="Блокировка"><svg width="17" height="14" viewBox="0 0 17 14"><path d="M1 6l6-5 7 4M2 6v6l5 2V7L2 6M7 7l4-2" fill="#eee" stroke="#444"/><path d="M9 8h6v5H9zM10 8V6h4v2" fill="#ddd" stroke="#444"/></svg></button>
            <button aria-label="Временно скрыть"><svg width="17" height="14" viewBox="0 0 17 14"><path d="M1 3l3 1c-1 5 3 6 5 2M9 6c0 4 6 4 6 0 1-4-3-4-5-1" fill="#fff" stroke="#444" stroke-width="1.500"/></svg></button>
            <button aria-label="Скрытые элементы"><svg width="17" height="14" viewBox="0 0 17 14"><circle cx="8" cy="5" r="3" fill="#d9ecfa" stroke="#3a78c0"/><path d="M7 8h2v5H7z" fill="#3a78c0"/></svg></button>
            <button aria-label="Свойства вида"><svg width="17" height="14" viewBox="0 0 17 14"><path d="M3 2h11v3M3 2v9h5M1 4h2M6 0v2M1 9h2" fill="none" stroke="#222" stroke-width="1.500"/><circle cx="12" cy="9" r="3" fill="#fff" stroke="#222" stroke-dasharray="2 1"/></svg></button>
            <button aria-label="Аналитическая модель"><svg width="17" height="14" viewBox="0 0 17 14"><path d="M1 13V4l3-3h8M1 5h9M1 9h9M5 13V4" fill="none" stroke="#444"/><path d="M3 12V6h6v6M3 9h6" fill="none" stroke="#b02030"/><circle cx="13" cy="6" r="3" fill="#d9ecfa" stroke="#3a78c0"/><path d="M13 9v4" stroke="#3a78c0" stroke-width="2"/></svg></button>
            <button aria-label="Наборы смещений"><svg width="17" height="14" viewBox="0 0 17 14"><path d="M1 5l4-3h10v6l-3 4M4 6h7v7H4zM1 5v6h3" fill="#ddd" stroke="#444"/></svg></button>
            <div class="hscroll"><span class="left"></span><span class="thumb"></span><span class="right"></span></div>
            <span class="grip"></span>
        </div>
    </section>

    <aside class="properties">
        <div class="dock-head"><span>Свойства</span><button aria-label="Закрыть"><svg width="10" height="10" viewBox="0 0 10 10"><path d="M1 1l8 8M9 1 1 9" stroke="#111" stroke-width="2"/></svg></button></div>
        <div class="props">
            <button class="type">
                <span class="preview"><span></span></span>
                <span class="type-name">Базовая крыша<br>Типовой - 400мм</span>
                <span class="caret caret-big"></span>
            </button>
            <div class="filter">
                <div class="combo"><select aria-label="Категория"><option>Крыши (1)</option></select></div>
                <button class="edit-type"><svg width="17" height="16" viewBox="0 0 17 16"><path d="M1 4l2-3h5v13H1zM1 8h7M9 4l2-3h4v5M8 4H1" fill="#fff" stroke="#444"/><path d="M9 6h7v9H9zM11 9h3M11 12h3" fill="#fff" stroke="#444"/></svg>Изменить тип</button>
            </div>
            <table>
                <tbody>
                <tr><th colspan="2">Зависимости</th></tr>
                <tr><td><label for="level">Базовый уровень</label></td><td class="editing"><input id="level" type="text" value="Этаж 11"></td></tr>
                <tr><td><label for="bound">Граница поме...</label></td><td><input id="bound" type="checkbox" checked></td></tr>
                <tr class="ro"><td><label for="mass">Связь с формо...</label></td><td><input id="mass" type="checkbox" disabled></td></tr>
                <tr><td>Смещение от у...</td><td>0.0</td></tr>
                <tr><td>Уровень среза</td><td>Нет</td></tr>
                <tr class="ro"><td>Смещение среза</td><td>0.0</td></tr>
                <tr><th colspan="2">Строительство</th></tr>
                <tr><td>Подрезка</td><td>Вертикальная</td></tr>
                <tr class="ro"><td>Ширина лобов...</td><td>0.0</td></tr>
                <tr><td>Привязка к грани</td><td>Ферма</td></tr>
                <tr class="ro"><td>Отметка конька</td><td>30400.0</td></tr>
                <tr><th colspan="2">Размеры</th></tr>
                <tr class="ro"><td>Уклон</td><td></td></tr>
                <tr class="ro"><td>Толщина</td><td>400.0</td></tr>
                <tr class="ro"><td>Объем</td><td>157.093 м³</td></tr>
                <tr class="ro"><td>Площадь</td><td>392.733 м²</td></tr>
                <tr><th colspan="2">Идентификация</th></tr>
                <tr><td>Комментарии</td><td></td></tr>
                <tr><td>Маркировка</td><td></td></tr>
                <tr><th colspan="2">Стадии</th></tr>
                <tr><td>Стадия возведе...</td><td>Новая констр...</td></tr>
                <tr><td>Стадия сноса</td><td>Нет</td></tr>
                </tbody>
            </table>
            <div class="apply">
                <a href="#">Справка по свойствам</a>
                <button disabled>Применить</button>
            </div>
        </div>
    </aside>
</main>

<footer class="status">
    <span class="hint">Щелчок - выбор, TAB - варианты, CTRL - добавление, SHIFT - снятие выбора.</span>
    <div class="worksets">
        <svg width="16" height="16" viewBox="0 0 16 16"><path d="M1 1h14v14H1z" fill="#fff" stroke="#222"/><path d="M1 3h14" stroke="#222" stroke-width="2"/><path d="M3 6h3v2H3zM5 8v5M7 7h6M6 10h7M6 13h7" stroke="#222" fill="none"/></svg>
        <svg width="16" height="16" viewBox="0 0 16 16"><path d="M3 1h12v14H3z" fill="#888"/><path d="M1 12h9M7 9l4 3-4 3" fill="none" stroke="#eee"/></svg>
        <div class="combo combo-dim"><select aria-label="Вариант" disabled><option>Главная модель</option></select></div>
    </div>
    <div class="selection">
        <svg width="18" height="18" viewBox="0 0 18 18"><rect x="1" y="2" width="14" height="5" rx="2" fill="#f5d24a" stroke="#b98a00"/><path d="M6 5v11l3-3 2 4 2-1-2-4h3z" fill="#fff" stroke="#333"/></svg>
        <svg width="18" height="18" viewBox="0 0 18 18"><path d="M2 8l6-6h8l-6 6zM1 13l6-4h8l-6 4z" fill="#fff" stroke="#1f63c8" stroke-width="1.500"/><path d="M9 6v10l3-3 2 4 2-1-2-4h3z" fill="#fff" stroke="#333"/></svg>
        <svg width="18" height="18" viewBox="0 0 18 18"><path d="M3 1h9v3h-2v4h3v3H2V8h3V4H3zM7 11v6" fill="#f2a04a" stroke="#b4540a"/><path d="M10 7v10l3-3 2 3 1-1-2-3h3z" fill="#fff" stroke="#333"/></svg>
        <svg width="18" height="18" viewBox="0 0 18 18"><path d="M2 6l6-4v12l-6 3z" fill="#9ed2f6" stroke="#1f63c8"/><path d="M9 1l7 7M16 1l-7 7" stroke="#d01010" stroke-width="2"/><path d="M8 7v10l3-3 2 3 2-1-2-3h3z" fill="#fff" stroke="#333"/></svg>
        <svg width="18" height="18" viewBox="0 0 18 18"><path d="M5 1v9M1 5h9M4 2h2M4 9h2" stroke="#222" stroke-width="2"/><path d="M10 1l6 6M16 1l-6 6" stroke="#d01010" stroke-width="2"/><path d="M10 7v10l3-3 2 3 1-1-2-3h3z" fill="#fff" stroke="#333"/></svg>
        <span class="filter-count"><svg width="18" height="18" viewBox="0 0 18 18"><path d="M1 2h16l-6 7v7l-4-3V9z" fill="#eee" stroke="#333"/></svg>:1</span>
    </div>
</footer>
</body>
</html>
```
FILE: styles.css
```css
* {
    box-sizing: border-box;
}

body {
    margin: 0;
    height: 100vh;
    display: flex;
    flex-direction: column;
    overflow: hidden;
    background: #d9e5d3;
    color: #2a2a2a;
    font-family: Lato, "Open Sans", sans-serif;
    font-size: 12px;
    line-height: 18px;
}

button {
    margin: 0;
    padding: 0;
    border: 1px solid transparent;
    background: none;
    color: inherit;
    font: inherit;
    cursor: pointer;
}

input, select {
    font: inherit;
}

svg {
    display: block;
    flex: none;
}

h1, h2 {
    margin: 0;
    font-size: 12px;
    font-weight: normal;
}

.caret {
    display: inline-block;
    flex: none;
    border: 3px solid transparent;
    border-top-color: #444;
    border-bottom: 0;
}

.caret-big {
    border-width: 4px;
    border-bottom: 0;
}

/* title bar */
.titlebar {
    position: relative;
    flex: none;
    display: flex;
    align-items: stretch;
    height: 23px;
    background: linear-gradient(#1b3450, #0f2745);
}

.app-button {
    position: absolute;
    left: 0;
    top: 0;
    z-index: 2;
    width: 39px;
    height: 41px;
    display: flex;
    align-items: center;
    justify-content: center;
    gap: 2px;
    border: 1px solid #111;
    background: linear-gradient(#c9c9c9, #9c9c9c 50%, #c4c4c4);
}

.qat, .infocenter {
    flex: none;
    display: flex;
    align-items: center;
    background: linear-gradient(#c2c2c2, #e4e4e4);
}

.qat {
    width: 382px;
    margin-left: 39px;
    padding: 0 3px 0 5px;
    justify-content: space-between;
}

.qbtn {
    width: 22px;
    height: 23px;
    display: flex;
    align-items: center;
    justify-content: center;
}

.qbtn-on {
    border-color: #2f7fd0;
    background: #b9d8f5;
}

.qbtn-text {
    color: #444;
    font-size: 18px;
    font-weight: bold;
}

.qsep {
    width: 1px;
    height: 18px;
    background: #aaa;
}

.title {
    flex: 1;
    text-align: center;
    color: #060d18;
    line-height: 24px;
    text-shadow: 0 0 6px #7f93ab, 0 0 10px #5d748f;
    white-space: nowrap;
}

.infocenter {
    width: 482px;
    padding: 0 4px;
    justify-content: space-between;
}

.play {
    border: 4px solid transparent;
    border-left: 5px solid #111;
    border-right: 0;
}

.search {
    width: 178px;
    height: 21px;
    padding: 2px;
    border: 0;
    background: #f7f7f7;
    font-style: italic;
}

.search::placeholder {
    color: #666;
}

.ibtn {
    display: flex;
    align-items: center;
    gap: 4px;
    white-space: nowrap;
}

.signin {
    color: #111;
}

.help span {
    width: 17px;
    height: 17px;
    border: 1px solid #2a4a9a;
    border-radius: 50%;
    background: #fff;
    color: #1c3fa8;
    font-weight: bold;
    line-height: 15px;
}

.window-buttons {
    display: flex;
    margin: 0 4px 3px 16px;
}

.window-buttons button {
    width: 28px;
    height: 18px;
    display: flex;
    align-items: center;
    justify-content: center;
    border: 1px solid #93a4b6;
    border-top: 0;
    background: linear-gradient(#5c7186, #253b55 50%, #3f5a78);
}

.window-buttons button:first-child {
    border-radius: 0 0 0 5px;
}

.window-buttons .close {
    width: 46px;
    border-radius: 0 0 5px;
    background: linear-gradient(#d98a7c, #b5301c 50%, #cf5a3c);
}

/* ribbon tabs */
.tabs {
    flex: none;
    display: flex;
    align-items: center;
    height: 22px;
    padding-left: 43px;
    border-top: 1px solid #ccc;
    border-bottom: 1px solid #5fae4a;
    background: #9c9c9c;
}

.tabs a {
    height: 20px;
    padding: 2px 10px 0;
    color: #222;
    text-decoration: none;
    white-space: nowrap;
}

.tabs .active {
    padding: 1px 9px 0;
    border: 1px solid #6fbe58;
    border-bottom: 0;
    background: linear-gradient(#c5e6b8, #eef8ea);
}

.collapse {
    margin: 0 5px 0 22px;
}

/* ribbon */
.ribbon {
    position: relative;
    flex: none;
    display: flex;
    height: 94px;
    border-bottom: 1px solid #5fae4a;
    background: linear-gradient(#cde6c4, #8e928c);
}

.panel {
    flex: none;
    display: flex;
    flex-direction: column;
    border-right: 1px solid #bbb;
    background: #fff;
}

.panel h2 {
    flex: none;
    height: 18px;
    background: #ededed;
    text-align: center;
    line-height: 18px;
    white-space: nowrap;
}

.panel h2 .caret {
    margin: 0 0 2px 4px;
}

.context h2 {
    background: linear-gradient(#cfe3c6, #e6f3e0);
}

.panel-body {
    flex: 1;
    display: flex;
    padding: 2px;
}

.column {
    flex-direction: column;
    align-items: center;
    justify-content: space-between;
}

.p-select { width: 65px; }
.p-props { width: 62px; }
.p-clip { width: 100px; }
.p-geom { width: 170px; }
.p-edit { width: 238px; }
.p-view { width: 65px; }
.p-measure { width: 65px; }
.p-create { width: 85px; border-right: 4px solid #a3a3a3; }
.p-mode { width: 91px; }
.p-shape { width: 366px; }

.big {
    flex: 1;
    display: flex;
    flex-direction: column;
    align-items: center;
    padding-top: 2px;
    line-height: 15px;
}

.big svg {
    margin-bottom: 3px;
}

.big .caret {
    margin-top: 2px;
}

.big-on {
    border-color: #3d86d8;
    background: linear-gradient(#bcd9f5, #cfe4f8);
}

.dim {
    color: #b4b4b4;
}

.dim .caret {
    border-top-color: #999;
}

.tile {
    width: 38px;
    height: 34px;
    display: flex;
    align-items: center;
    justify-content: center;
}

.tile-on {
    border-color: #3d86d8;
    background: #c3dcf5;
}

.stack {
    display: flex;
    flex-direction: column;
    align-items: flex-start;
    gap: 2px;
    padding-top: 1px;
}

.stack button {
    height: 22px;
    padding: 0 2px;
    display: flex;
    align-items: center;
}

.row {
    display: flex;
    align-items: center;
    gap: 5px;
    white-space: nowrap;
}

.row .caret {
    margin-left: 4px;
}

.tight {
    gap: 2px;
}

.p-clip .stack {
    width: 24px;
}

.p-geom .panel-body {
    padding-left: 4px;
}

.p-geom .stack {
    width: 25px;
    white-space: nowrap;
}

.p-geom .stack:first-child {
    width: 102px;
}

.p-edit .panel-body {
    padding-left: 4px;
}

.big-grid {
    display: grid;
    grid-template-columns: repeat(4, 39px);
    align-content: space-between;
}

.big-grid button {
    width: 36px;
    height: 34px;
}

.small-grid {
    display: grid;
    grid-template-columns: repeat(3, 25px);
    gap: 2px 0;
    margin-left: 4px;
    padding-top: 1px;
}

.small-grid button {
    height: 22px;
}

.pair {
    display: grid;
    grid-template-columns: 34px 20px;
    align-content: center;
    gap: 8px 0;
    padding-left: 6px;
}

.quad {
    display: grid;
    grid-template-columns: 38px 38px;
    align-content: space-between;
    padding-left: 4px;
}

.p-measure .tight {
    gap: 0;
}

.p-shape .big {
    flex: none;
    width: 80px;
}

.p-shape .reset {
    width: 89px;
    margin-left: auto;
    border-left: 1px solid #ddd;
}

.row-on {
    width: 117px;
    border-color: #3d86d8;
    background: #c5e0f5;
}

.busy {
    position: absolute;
    left: 1039px;
    top: 21px;
    mix-blend-mode: multiply;
}

.hourglass {
    position: absolute;
    left: 1071px;
    top: 47px;
}

.options {
    flex: none;
    height: 28px;
    padding: 6px 7px;
    color: #a3aca0;
}

/* work area */
main {
    flex: 1;
    display: flex;
    min-height: 0;
    background: #eceff2;
}

.dock-head {
    display: flex;
    align-items: center;
    justify-content: space-between;
    height: 18px;
    padding: 0 6px 0 2px;
    background: #c0cde0;
    color: #56657a;
    white-space: nowrap;
}

.browser {
    width: 239px;
    display: flex;
    flex-direction: column;
    flex: none;
}

.tree {
    flex: 1;
    padding-top: 1px;
    border-top: 2px solid #777;
    background: #fff;
}

.tree, .tree ul {
    margin: 0;
    padding-left: 0;
    list-style: none;
}

.tree ul {
    width: 100%;
}

.tree li {
    position: relative;
    display: flex;
    flex-wrap: wrap;
    align-items: center;
    padding-left: 20px;
}

.tree li span {
    margin-left: 6px;
    line-height: 18px;
}

.tree li .current {
    margin-left: 3px;
    padding: 0 3px;
    background: #e0e0e0;
    font-weight: bold;
}

.tree li::before {
    content: "";
    position: absolute;
    left: 8px;
    top: 0;
    bottom: 0;
    border-left: 1px dotted #aaa;
}

.tree li:last-child::before {
    bottom: auto;
    height: 9px;
}

.tree li::after {
    content: "";
    position: absolute;
    left: 8px;
    top: 9px;
    width: 14px;
    border-top: 1px dotted #aaa;
}

.tree > li::after {
    width: 10px;
}

.tree .open::after, .tree .shut::after {
    content: "−";
    left: 4px;
    top: 5px;
    width: 9px;
    height: 9px;
    border: 1px solid #999;
    background: #fff;
    font-size: 9px;
    line-height: 7px;
    text-align: center;
}

.tree .shut::after {
    content: "+";
}

.ti {
    width: 15px;
    height: 14px;
}

.view {
    flex: 1;
    display: flex;
    flex-direction: column;
    min-width: 0;
    margin: 0 6px 2px 4px;
    border-top: 1px solid #777;
    border-left: 2px solid #777;
}

.view-main {
    flex: 1;
    display: flex;
    min-height: 0;
}

.canvas {
    position: relative;
    flex: 1;
    overflow: hidden;
    background: #fff;
}

.model {
    position: absolute;
    left: 415px;
    top: 42px;
}

.mdi {
    position: absolute;
    top: 7px;
    right: 2px;
    display: flex;
    gap: 4px;
}

.cube {
    position: absolute;
    top: 81px;
    right: 24px;
}

.cube-text {
    fill: #888;
    font-size: 11px;
}

.compass {
    fill: #f3f3f3;
    stroke: #999;
    font-size: 20px;
}

.navbar {
    position: absolute;
    top: 200px;
    right: 2px;
    width: 34px;
    height: 117px;
    display: flex;
    flex-direction: column;
    align-items: center;
    justify-content: space-between;
    padding: 2px 2px 1px;
    border: 2px solid #bbb;
    border-radius: 5px;
    background: #f2f2f2;
}

.navbar .caret {
    border-top-color: #888;
}

.navbar hr {
    width: 100%;
    margin: 0;
    border: 0;
    border-top: 1px solid #bbb;
}

.nav-end {
    align-self: flex-end;
}

.vscroll {
    width: 17px;
    display: flex;
    flex-direction: column;
    align-items: center;
    justify-content: space-between;
    padding: 6px 0;
    background: #ededed;
}

.up, .down, .left, .right {
    border: 4px solid transparent;
}

.up { border-top: 0; border-bottom-color: #222; }
.down { border-bottom: 0; border-top-color: #222; }
.left { border-left: 0; border-right-color: #222; }
.right { border-right: 0; border-left-color: #222; }

.thumb {
    width: 15px;
    height: 15px;
    border: 1px solid #999;
    background: linear-gradient(#f6f6f6, #cfcfcf);
}

.viewbar {
    flex: none;
    display: flex;
    align-items: center;
    height: 17px;
    background: #efefef;
}

.scale {
    width: 77px;
    padding-left: 22px;
}

.viewbar button {
    width: 21px;
    display: flex;
}

.hscroll {
    flex: 1;
    display: flex;
    align-items: center;
    justify-content: space-between;
    padding: 0 7px 0 4px;
}

.grip {
    width: 17px;
}

.properties {
    flex: none;
    width: 218px;
    display: flex;
    flex-direction: column;
}

.properties .dock-head {
    padding: 0 3px 0 4px;
}

.props {
    flex: 1;
    display: flex;
    flex-direction: column;
    margin: 2px 0 2px 1px;
    border-top: 1px solid #777;
    border-left: 1px solid #777;
    background: #fff;
}

.type {
    flex: none;
    display: flex;
    align-items: center;
    gap: 4px;
    height: 73px;
    padding: 0 2px;
    background: linear-gradient(#fafafa, #ececec);
    color: #444;
    text-align: left;
    line-height: 16px;
}

.preview {
    width: 66px;
    height: 66px;
    display: flex;
    align-items: center;
    border: 1px solid #ccc;
    background: #fff;
}

.preview span {
    width: 100%;
    height: 29px;
    border: 1px solid #0b6e0b;
    background: #0a9e0a;
}

.type-name {
    flex: 1;
}

.filter {
    flex: none;
    display: flex;
    align-items: center;
    gap: 4px;
    height: 24px;
    background: #f0f0f0;
}

.combo {
    position: relative;
    width: 107px;
}

.combo::after {
    content: "";
    position: absolute;
    right: 5px;
    top: 9px;
    border: 4px solid transparent;
    border-top-color: #222;
    border-bottom: 0;
    pointer-events: none;
}

.combo select {
    display: block;
    width: 100%;
    height: 22px;
    padding: 0 3px;
    border: 1px solid #888;
    border-radius: 3px;
    background: linear-gradient(#f4f4f4, #d8d8d8);
    appearance: none;
}

.edit-type {
    flex: 1;
    display: flex;
    align-items: center;
    gap: 4px;
    white-space: nowrap;
}

table {
    width: 100%;
    table-layout: fixed;
    border-collapse: collapse;
}

th, td {
    height: 18px;
    padding: 0 0 0 10px;
    border: 1px dotted #aaa;
    border-left: 0;
    line-height: 17px;
    text-align: left;
    white-space: nowrap;
    color: #000;
}

th {
    position: relative;
    padding-left: 4px;
    border: 0;
    background: #dcdcdc;
    font-weight: normal;
}

th::after {
    content: "«";
    position: absolute;
    right: 4px;
    top: 0;
    font-size: 14px;
    font-weight: bold;
    transform: rotate(90deg);
}

td + td {
    padding-left: 4px;
}

.ro td {
    color: #8a8a8a;
}

td.editing {
    padding: 0;
    border: 1px solid #111;
}

.editing input {
    display: block;
    width: 100%;
    height: 15px;
    padding: 0 3px;
    border: 0;
}

input[type="checkbox"] {
    display: flex;
    align-items: center;
    justify-content: center;
    width: 13px;
    height: 13px;
    margin: 0;
    border: 1px solid #8a8a9a;
    background: #e6e8f2;
    appearance: none;
}

input[type="checkbox"]:disabled {
    border-color: #ccc;
    background: #f2f2f2;
}

input[type="checkbox"]:checked::before {
    content: "✔";
    color: #3c4596;
    font-size: 11px;
}

.apply {
    display: flex;
    align-items: center;
    justify-content: space-between;
    height: 26px;
    margin-top: auto;
    padding: 0 2px;
    background: #f0f0f0;
    white-space: nowrap;
}

.apply a {
    color: #0a5fc8;
}

.apply button {
    height: 21px;
    padding: 0 7px;
    border: 1px solid #bbb;
    border-radius: 2px;
    background: #f4f4f4;
    color: #999;
}

/* status bar */
.status {
    flex: none;
    display: flex;
    align-items: center;
    height: 22px;
    border-top: 1px solid #888;
    background: linear-gradient(#e6e6e6, #c6c6c6);
    white-space: nowrap;
}

.hint {
    width: 1147px;
    color: #000;
    line-height: 20px;
}

.worksets, .selection {
    display: flex;
    align-items: center;
    gap: 8px;
}

.combo-dim {
    width: 155px;
}

.combo-dim::after {
    border-top-color: #999;
}

.combo-dim select {
    height: 20px;
    border: 0;
    border-radius: 0;
    background: #f7f7f7;
    color: #888;
}

.selection {
    margin-left: auto;
    margin-right: 63px;
}

.filter-count {
    display: flex;
    color: #000;
}
```
